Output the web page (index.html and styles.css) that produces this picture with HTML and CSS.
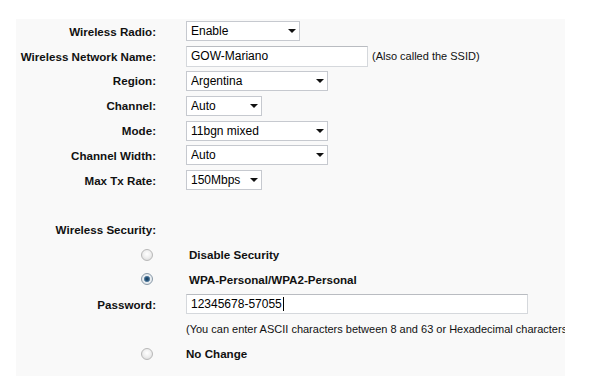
FILE: index.html
```html
<!DOCTYPE html>
<html lang="en">

<head>
    <meta charset="UTF-8">
    <title>Wireless Settings</title>
    <link rel="stylesheet" href="styles.css">
</head>

<body>
    <div class="panel">
        <div class="form-grid">
            <label class="label">Wireless Radio:</label>
            <div class="field">
                <span class="select-wrap w-short">
                    <select class="select"><option>Enable</option></select>
                    <span class="arrow"></span>
                </span>
            </div>

            <label class="label">Wireless Network Name:</label>
            <div class="field">
                <input type="text" class="text-input w-name" value="GOW-Mariano">
                <span class="note">(Also called the SSID)</span>
            </div>

            <label class="label">Region:</label>
            <div class="field">
                <span class="select-wrap w-long">
                    <select class="select"><option>Argentina</option></select>
                    <span class="arrow"></span>
                </span>
            </div>

            <label class="label">Channel:</label>
            <div class="field">
                <span class="select-wrap w-tiny">
                    <select class="select"><option>Auto</option></select>
                    <span class="arrow"></span>
                </span>
            </div>

            <label class="label">Mode:</label>
            <div class="field">
                <span class="select-wrap w-long">
                    <select class="select"><option>11bgn mixed</option></select>
                    <span class="arrow"></span>
                </span>
            </div>

            <label class="label">Channel Width:</label>
            <div class="field">
                <span class="select-wrap w-long">
                    <select class="select"><option>Auto</option></select>
                    <span class="arrow"></span>
                </span>
            </div>

            <label class="label">Max Tx Rate:</label>
            <div class="field">
                <span class="select-wrap w-tiny">
                    <select class="select"><option>150Mbps</option></select>
                    <span class="arrow"></span>
                </span>
            </div>

            <!-- spacer row -->
            <div class="label"></div>
            <div class="field"></div>

            <label class="label">Wireless Security:</label>
            <div class="field"></div>

            <div class="label"><input type="radio" name="sec" class="radio"></div>
            <div class="field option">Disable Security</div>

            <div class="label"><input type="radio" name="sec" class="radio" checked></div>
            <div class="field option">WPA-Personal/WPA2-Personal</div>

            <label class="label">Password:</label>
            <div class="field">
                <div class="text-input w-pass">12345678-57055<span class="caret"></span></div>
            </div>

            <div class="label"></div>
            <div class="field note">(You can enter ASCII characters between 8 and 63 or Hexadecimal characters between 8 and 64.)</div>

            <div class="label"><input type="radio" name="sec" class="radio"></div>
            <div class="field option option-tight">No Change</div>
        </div>
    </div>
</body>

</html>
```

FILE: styles.css
```css
body {
    margin: 0;
    background: #fff;
    font-family: "Liberation Sans", Arial, sans-serif;
    color: #000;
}

.panel {
    margin: 19px 0 0 16px;
    width: 549px;
    height: 357px;
    background: #f9f9f9;
    overflow: hidden;
}

/* Two column form: labels right aligned, fields start at x=186 */
.form-grid {
    display: grid;
    grid-template-columns: 170px 1fr;
    grid-auto-rows: 24.8px;
}

.label {
    display: flex;
    align-items: center;
    justify-content: flex-end;
    padding-right: 30px;
    font-size: 11.6px;
    font-weight: bold;
    color: #111;
    white-space: nowrap;
}

.field {
    display: flex;
    align-items: center;
    gap: 4px;
    white-space: nowrap;
}

.note {
    font-size: 11px;
    color: #111;
}

.option {
    font-size: 11.6px;
    font-weight: bold;
    padding-left: 3px;
    color: #111;
}

.option-tight {
    padding-left: 0;
}

/* Selects */
.select-wrap {
    position: relative;
    display: inline-block;
    height: 20px;
}

.select {
    appearance: none;
    -webkit-appearance: none;
    width: 100%;
    height: 20px;
    margin: 0;
    padding: 0 0 0 4px;
    border: 1px solid #c6c9cf;
    border-radius: 0;
    background: #fff;
    font-family: "Liberation Sans", Arial, sans-serif;
    font-size: 12px;
    color: #000;
}

.arrow {
    position: absolute;
    right: 4px;
    top: 8px;
    width: 0;
    height: 0;
    border-left: 4px solid transparent;
    border-right: 4px solid transparent;
    border-top: 4px solid #111;
    pointer-events: none;
}

.w-short { width: 114px; }
.w-long { width: 142px; }
.w-tiny { width: 76px; }

/* Text inputs */
.text-input {
    box-sizing: border-box;
    height: 21px;
    margin: 0;
    padding: 0 4px;
    border: 1px solid #d5d8dc;
    border-top-color: #b9bcc1;
    background: #fff;
    font-family: "Liberation Sans", Arial, sans-serif;
    font-size: 12px;
    color: #000;
    display: flex;
    align-items: center;
}

.w-name { width: 182px; }
.w-pass { width: 342px; height: 20px; }

.caret {
    display: inline-block;
    width: 1px;
    height: 14px;
    background: #000;
    margin-left: 1px;
}

/* Radios */
.radio {
    appearance: none;
    -webkit-appearance: none;
    width: 12px;
    height: 12px;
    margin: 0 3px 0 0;
    border: 1px solid #b8b8b8;
    border-radius: 50%;
    background: radial-gradient(circle at 50% 40%, #ffffff 0, #f0f0f0 45%, #d6d6d6 100%);
}

.radio:checked {
    border-color: #8a9aa8;
    background: radial-gradient(circle at 50% 50%, #16344f 0, #2c5d86 28%, #6e8ea8 40%, #e9eef2 48%, #dfe3e7 100%);
}
```
